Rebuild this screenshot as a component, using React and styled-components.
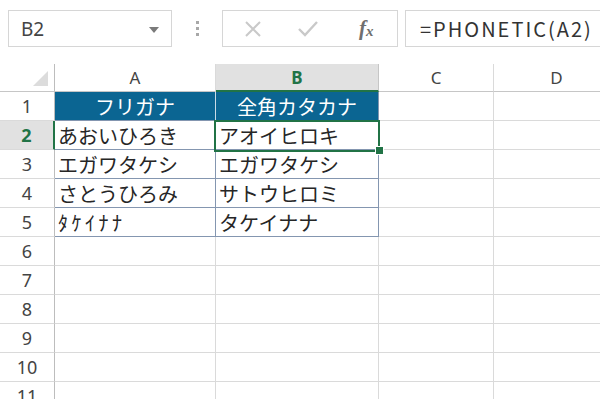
import React from "react"
import styled, { createGlobalStyle, css } from "styled-components"

const GlobalStyle = createGlobalStyle`
    html, body {
        margin: 0;
        padding: 0;
        background: #ffffff;
    }
    body {
        width: 600px;
        height: 399px;
        overflow: hidden;
        font-family: "Noto Sans", "Noto Sans CJK JP", sans-serif;
    }
`

const GREEN = "#217346"
const GRID = "#dadada"
const TABLE_LINE = "#8496b0"

const Page = styled.div`
    width: 600px;
    height: 399px;
    overflow: hidden;
`

const Toolbar = styled.div`
    display: flex;
    align-items: center;
    height: 37px;
    padding: 10px 0 0 8px;
`

const NameBox = styled.div`
    box-sizing: border-box;
    width: 164px;
    height: 37px;
    border: 1px solid #d6d6d6;
    display: flex;
    align-items: center;
    justify-content: space-between;
    padding: 0 12px 0 12px;
    font-size: 19px;
    color: #444;
`

const DropArrow = styled.span`
    width: 0;
    height: 0;
    border-left: 5px solid transparent;
    border-right: 5px solid transparent;
    border-top: 6px solid #7a7a7a;
    margin-top: 2px;
`

const Grip = styled.div`
    width: 50px;
    display: flex;
    flex-direction: column;
    align-items: center;
    gap: 3px;
    span {
        width: 3px;
        height: 3px;
        background: #a8a8a8;
    }
`

const FxButtons = styled.div`
    box-sizing: border-box;
    width: 176px;
    height: 37px;
    border: 1px solid #d6d6d6;
    display: flex;
    align-items: center;
    padding: 0 0 0 20px;
    gap: 34px;
`

const FxLabel = styled.span`
    font-family: "Liberation Serif", serif;
    font-style: italic;
    font-weight: bold;
    font-size: 21px;
    color: #6f6f6f;
    margin-left: 6px;
    sub {
        font-size: 15px;
        vertical-align: baseline;
        position: relative;
        top: 1px;
    }
`

const FormulaInput = styled.div`
    box-sizing: border-box;
    flex: 1;
    height: 37px;
    margin-left: 7px;
    margin-right: -12px;
    border: 1px solid #d6d6d6;
    display: flex;
    align-items: center;
    padding-left: 14px;
    font-family: "Noto Sans CJK JP", sans-serif;
    font-size: 20px;
    letter-spacing: 2px;
    color: #333;
    white-space: nowrap;
`

const Sheet = styled.div`
    margin-top: 17px;
    display: grid;
    grid-template-columns: 55px 161px 163px 115px 1fr;
    grid-template-rows: 28px;
    grid-auto-rows: 29px;
    width: 620px;
`

const Cell = styled.div`
    box-sizing: border-box;
    border-right: 1px solid ${GRID};
    border-bottom: 1px solid ${GRID};
    display: flex;
    align-items: center;
    font-family: "Noto Sans CJK JP", sans-serif;
    font-size: 20px;
    color: #262626;
    padding-left: 3px;
    white-space: nowrap;
`

const Corner = styled(Cell)`
    border-right: 1px solid #bdbdbd;
    border-bottom: 1px solid #c6c6c6;
    justify-content: flex-end;
    align-items: flex-end;
    padding: 0 6px 5px 0;
    span {
        width: 0;
        height: 0;
        border-left: 15px solid transparent;
        border-bottom: 15px solid #dcdcdc;
    }
`

const ColHead = styled(Cell)`
    justify-content: center;
    padding: 0;
    font-family: "Noto Sans", sans-serif;
    font-size: 17px;
    color: #444;
    border-bottom: 1px solid #c6c6c6;
    ${p => p.$active && css`
        background: #e1e1e1;
        color: ${GREEN};
        font-weight: bold;
        border-bottom: 2px solid ${GREEN};
        border-right-color: #c6c6c6;
    `}
`

const RowHead = styled(Cell)`
    justify-content: center;
    padding: 0;
    font-family: "Noto Sans", sans-serif;
    font-size: 18px;
    color: #444;
    border-right: 1px solid #bdbdbd;
    ${p => p.$active && css`
        background: #e1e1e1;
        color: ${GREEN};
        font-weight: bold;
        border-right: 2px solid ${GREEN};
    `}
`

const TableHead = styled(Cell)`
    justify-content: center;
    padding: 0;
    background: #0b6592;
    color: #ffffff;
    border-bottom: 1px solid ${TABLE_LINE};
    border-right: 1px solid ${p => (p.$last ? TABLE_LINE : "#c9dbe6")};
`

const TableCell = styled(Cell)`
    border-right: 1px solid ${TABLE_LINE};
    border-bottom: 1px solid ${TABLE_LINE};
    ${p => p.$halfWidth && css`
        letter-spacing: 3.5px;
    `}
    ${p => p.$selected && css`
        position: relative;
        &::after {
            content: "";
            position: absolute;
            top: -1px;
            left: -2px;
            right: -2px;
            bottom: -3px;
            border: 2px solid ${GREEN};
        }
        &::before {
            content: "";
            position: absolute;
            right: -6px;
            bottom: -6px;
            width: 7px;
            height: 7px;
            background: ${GREEN};
            border: 1px solid #ffffff;
            z-index: 1;
        }
    `}
`

const CrossIcon = () => (
    <svg width="20" height="20" viewBox="0 0 20 20">
        <path d="M3 3 L17 17 M17 3 L3 17" stroke="#c9c9c9" strokeWidth="2" fill="none" />
    </svg>
)

const CheckIcon = () => (
    <svg width="22" height="20" viewBox="0 0 22 20">
        <path d="M2 10 L8 16 L20 3" stroke="#c9c9c9" strokeWidth="2.4" fill="none" />
    </svg>
)

const rows = [
    ["フリガナ", "全角カタカナ"],
    ["あおいひろき", "アオイヒロキ"],
    ["エガワタケシ", "エガワタケシ"],
    ["さとうひろみ", "サトウヒロミ"],
    ["ﾀｹｲﾅﾅ", "タケイナナ"],
]

const App = () => {
    const emptyRows = [6, 7, 8, 9, 10, 11]

    return (
        <Page>
            <GlobalStyle />
            <Toolbar>
                <NameBox>
                    B2
                    <DropArrow />
                </NameBox>
                <Grip>
                    <span />
                    <span />
                    <span />
                </Grip>
                <FxButtons>
                    <CrossIcon />
                    <CheckIcon />
                    <FxLabel>f<sub>x</sub></FxLabel>
                </FxButtons>
                <FormulaInput>=PHONETIC(A2)</FormulaInput>
            </Toolbar>

            <Sheet>
                <Corner><span /></Corner>
                <ColHead>A</ColHead>
                <ColHead $active>B</ColHead>
                <ColHead>C</ColHead>
                <ColHead>D</ColHead>

                {rows.map((r, i) => (
                    <React.Fragment key={i}>
                        <RowHead $active={i === 1}>{i + 1}</RowHead>
                        {i === 0 ? (
                            <>
                                <TableHead>{r[0]}</TableHead>
                                <TableHead $last>{r[1]}</TableHead>
                            </>
                        ) : (
                            <>
                                <TableCell $halfWidth={i === 4}>{r[0]}</TableCell>
                                <TableCell $selected={i === 1}>{r[1]}</TableCell>
                            </>
                        )}
                        <Cell />
                        <Cell />
                    </React.Fragment>
                ))}

                {emptyRows.map(n => (
                    <React.Fragment key={n}>
                        <RowHead>{n}</RowHead>
                        <Cell />
                        <Cell />
                        <Cell />
                        <Cell />
                    </React.Fragment>
                ))}
            </Sheet>
        </Page>
    )
}

export default App
